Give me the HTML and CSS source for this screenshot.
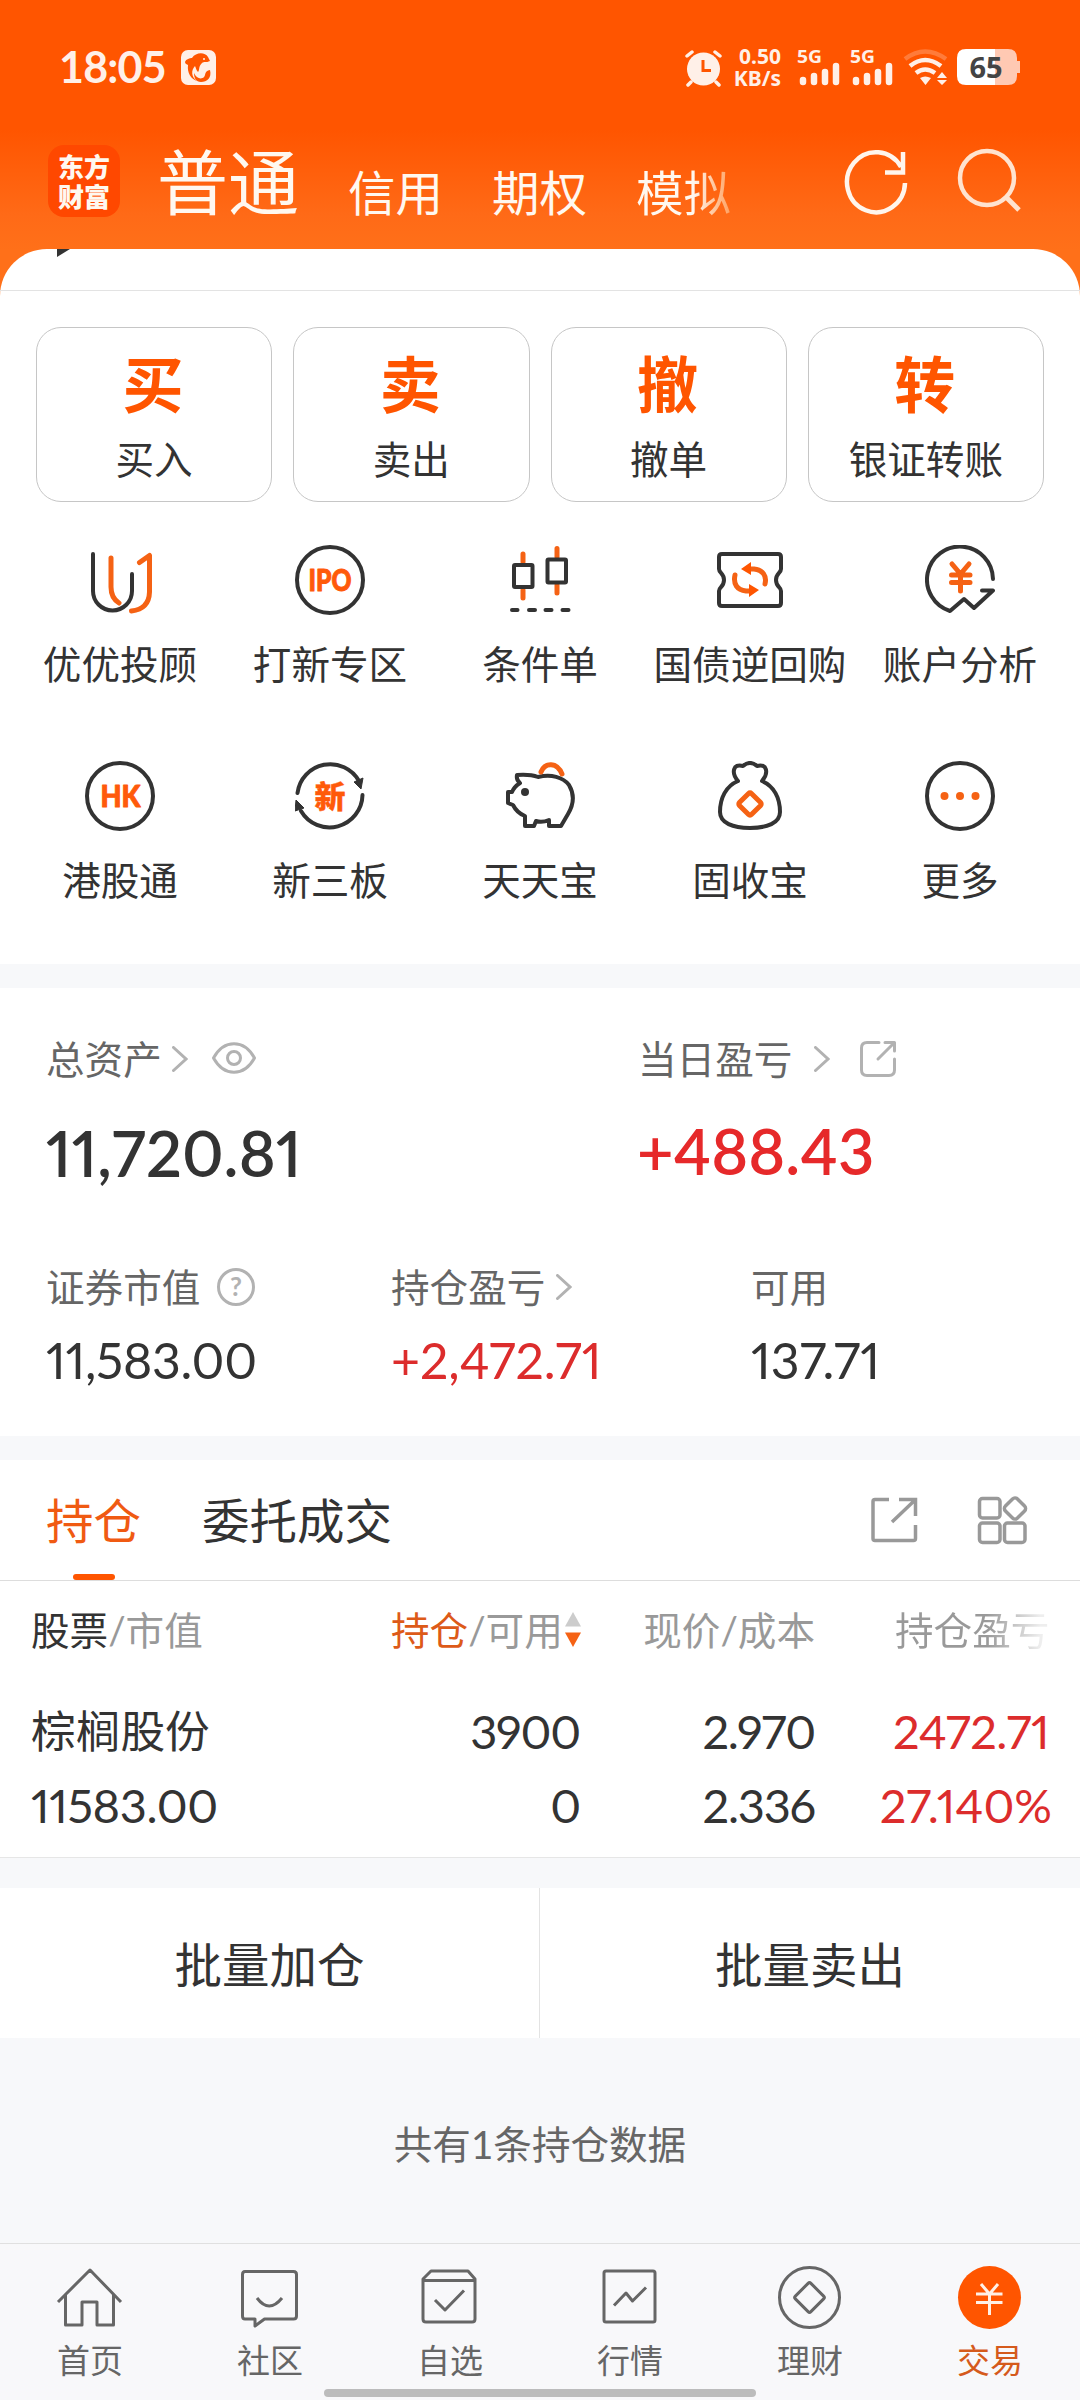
FILE: index.html
```html
<!DOCTYPE html>
<html lang="zh-CN">
<head>
<meta charset="utf-8">
<title>东方财富</title>
<link rel="stylesheet" href="styles.css">
</head>
<body>
<header class="top">
  <div class="status">
    <span class="clock">18:05</span>
    <svg class="app-mark" viewBox="181 49 35 35" width="35" height="35"><rect x="181" y="49" width="35" height="35" rx="7" fill="#fff0e8"/><path d="M185 61C186 58 190 57 192 57C196 51 205 51 208 56L210 60C206 62 204 60 202 62C198 66 200 69 198 71C196 69 196 67 195 65C191 69 191 76 197 80C191 78 187 72 188 64C187 63 185 63 185 61Z" fill="#ff5500"/><circle cx="204" cy="58" r="1" fill="#fff0e8"/><path d="M210 69C212 77 207 81 201 81C196 81 194 77 194 72C196 77 201 79 204 76C206 74 204 70 210 69Z" fill="#ff5500"/></svg>
    <div class="status-right">
      <svg viewBox="684 48 39 39" width="39" height="39"><g fill="none" stroke="#fff0e8" stroke-width="3.5" stroke-linecap="round"><path d="M687 56L692 52M720 56L715 52M691 82L688 85M716 82L719 85"/></g><circle cx="703.5" cy="69" r="16.5" fill="#fff0e8"/><path d="M703 60V70.500H711" fill="none" stroke="#ff5500" stroke-width="3"/></svg>
      <div class="speed">0.50<br>KB/s</div>
      <svg class="signal" viewBox="797 42 44 52" width="44" height="52"><text x="797" y="64" textLength="25" lengthAdjust="spacingAndGlyphs">5G</text><path d="M803 81V83M814 77V83M825 73V83M836 67V83" stroke="#fff0e8" stroke-width="6.500" stroke-linecap="round"/></svg>
      <svg class="signal" viewBox="797 42 44 52" width="44" height="52"><text x="797" y="64" textLength="25" lengthAdjust="spacingAndGlyphs">5G</text><path d="M803 81V83M814 77V83M825 73V83M836 67V83" stroke="#fff0e8" stroke-width="6.500" stroke-linecap="round"/></svg>
      <svg class="wifi" viewBox="903 48 46 40" width="46" height="40"><g fill="none" stroke="#fff0e8" stroke-width="4.500"><path d="M905 60Q925 45 946 60" stroke-opacity=".25"/><path d="M910 67Q925 55 941 67"/><path d="M916 74Q925 67 935 74"/></g><path d="M920 79Q925 76 931 79L925.500 86Z M937 79L942 73L947 79Z M937 81H947L942 86Z" fill="#fff0e8"/></svg>
      <svg class="battery" viewBox="957 45 63 44" width="63" height="44"><path d="M995 49H1008Q1017 49 1017 58V61H1020V73H1017V76Q1017 85 1008 85H995Z" fill="#ffc9b3"/><path d="M995 49H966Q957 49 957 58V76Q957 85 966 85H995Z" fill="#fff"/><text x="986" y="77.500" text-anchor="middle">65</text></svg>
    </div>
  </div>
  <nav class="modes">
    <div class="logo">东方<br>财富</div>
    <span class="mode mode-active">普通</span>
    <span class="mode">信用</span>
    <span class="mode">期权</span>
    <span class="mode mode-fade">模拟</span>
    <svg class="refresh" viewBox="843 149 66 66" width="66" height="66"><path d="M905 183A29 30 0 1 1 901 167M903 152V172.500H885" fill="none" stroke="#fff5ec" stroke-width="4.500"/></svg>
    <svg viewBox="957 147 66 66" width="66" height="66"><circle cx="987" cy="178" r="27" fill="none" stroke="#ffe3cf" stroke-width="4.500"/><path d="M1006 197L1019 210" stroke="#ffe3cf" stroke-width="5"/></svg>
  </nav>
</header>

<main>
<section class="panel">
  <div class="panel-cap"><svg viewBox="0 0 13 8" width="13" height="8"><path d="M0 0H13L0 8Z" fill="#333"/></svg></div>
  <div class="cards">
    <div class="card"><b>买</b><span>买入</span></div>
    <div class="card"><b>卖</b><span>卖出</span></div>
    <div class="card"><b>撤</b><span>撤单</span></div>
    <div class="card"><b>转</b><span>银证转账</span></div>
  </div>
  <div class="shortcuts">
    <div class="shortcut">
      <svg class="ico" viewBox="85 545 70 70"><path class="d" d="M93 554V591a19.500 19.500 0 0 0 39 0V574"/><path class="o" d="M111 558V587Q111 598 119 603M139.500 562.500L149.500 555.500V592Q149 609 131.500 611"/></svg>
      <span>优优投顾</span></div>
    <div class="shortcut">
      <svg class="ico" viewBox="295 545 70 70"><circle class="d" cx="330" cy="580" r="33"/><text x="308.500" y="591" textLength="43" lengthAdjust="spacingAndGlyphs">IPO</text></svg>
      <span>打新专区</span></div>
    <div class="shortcut">
      <svg class="ico" viewBox="505 545 70 70"><path class="o" d="M523 554V562M523 590V598M557 548.500V557M557 585V593"/><rect class="d" x="514" y="565" width="18.500" height="22" rx="1"/><rect class="d" x="547.500" y="559.500" width="18.500" height="23" rx="1"/><path class="d" d="M512 610H517.500M529 610H535M545.500 610H551.500M562.500 610H568.500"/></svg>
      <span>条件单</span></div>
    <div class="shortcut">
      <svg class="ico" viewBox="715 545 70 70"><path class="d" d="M722 554H778Q781 554 781 557V569C781 573 776 573 776 580C776 587 781 587 781 591V603Q781 606 778 606H722Q719 606 719 603V591C719 587 724 587 724 580C724 573 719 573 719 569V557Q719 554 722 554Z"/><path class="o" d="M748 569H754C763 570 767 576 765 584M752 591H746C737 590 733 584 735 575"/><path d="M741 569L751 562V575ZM759 590L749 584V597Z" fill="#ff5500"/></svg>
      <span>国债逆回购</span></div>
    <div class="shortcut">
      <svg class="ico" viewBox="925 545 70 70"><path class="d" d="M993 579A33 33 0 1 0 950 611L964 599L974 608L993 590.500H982"/><path class="o" d="M952 564L960.500 574L969 564M951.500 575H970M951.500 582.500H970M960.500 574V591"/></svg>
      <span>账户分析</span></div>
    <div class="shortcut">
      <svg class="ico" viewBox="85 761 70 70"><circle class="d" cx="120" cy="796" r="33"/><text x="100.500" y="807" textLength="40" lengthAdjust="spacingAndGlyphs">HK</text></svg>
      <span>港股通</span></div>
    <div class="shortcut">
      <svg class="ico" viewBox="295 761 70 70"><path class="d" d="M297.500 793A33 33 0 0 1 359 781M362.500 795A33 33 0 0 1 301 811"/><path d="M354 782L363 778L361 789ZM296 800L304 808L295 811Z" fill="#333" stroke="#333"/><text class="cn" x="330" y="807.500" text-anchor="middle">新</text></svg>
      <span>新三板</span></div>
    <div class="shortcut">
      <svg class="ico" viewBox="505 761 70 70"><path class="d" d="M517 775Q530 774 538 777C551 774 563 777 569 785C575 795 574 804 568 814L561 826H549V820Q542 823 536 821L534 826H525V816Q517 813 513 805L508 803V792H512Q514 787 520 783Q516 780 517 775Z"/><circle cx="525" cy="792" r="4" fill="#333"/><path class="o" d="M541 772C545 762 557 762 562 774"/></svg>
      <span>天天宝</span></div>
    <div class="shortcut">
      <svg class="ico" viewBox="715 761 70 70"><path class="d" d="M738 781C731 773 733 763 743 766Q750 760 757 766C767 763 769 773 762 781C774 786 780 798 780 812C780 823 767 828 750 828C733 828 720 823 720 812C720 798 726 786 738 781"/><rect class="o" x="741.500" y="795.500" width="17" height="17" rx="2" transform="rotate(45 750 804)"/></svg>
      <span>固收宝</span></div>
    <div class="shortcut">
      <svg class="ico" viewBox="925 761 70 70"><circle class="d" cx="960" cy="796" r="33"/><g fill="#f56214"><circle cx="944.500" cy="796" r="4"/><circle cx="960" cy="796" r="4"/><circle cx="975.500" cy="796" r="4"/></g></svg>
      <span>更多</span></div>
  </div>
</section>

<section class="assets">
  <div class="asset-main">
    <div class="asset">
      <div class="label">总资产<svg class="chev c1" viewBox="0 0 16 26" width="16" height="26"><path d="M1.500 1.500L14 13L1.500 24.500"/></svg><svg class="eye" viewBox="211 1043 46 34" width="46" height="34"><path d="M213.500 1059C224 1040 244 1040 254.500 1059C244 1078 224 1078 213.500 1059Z"/><circle cx="234" cy="1059" r="6.500"/></svg></div>
      <div class="big">11,720.81</div>
    </div>
    <div class="asset">
      <div class="label">当日盈亏<svg class="chev c2" viewBox="0 0 16 26" width="16" height="26"><path d="M1.500 1.500L14 13L1.500 24.500"/></svg><svg class="share" viewBox="859 1040 38 38" width="38" height="38"><path d="M879 1042.500H867Q861.500 1042.500 861.500 1048V1070Q861.500 1075.500 867 1075.500H889Q894.500 1075.500 894.500 1070V1059M878 1059L894 1043M885 1042.500H894.500V1051"/></svg></div>
      <div class="big big-red">+488.43</div>
    </div>
  </div>
  <div class="asset-sub">
    <div><div class="label">证券市值<svg class="help" viewBox="0 0 40 40" width="40" height="40"><circle cx="20" cy="20" r="17.500" fill="none" stroke="#b2b2b2" stroke-width="3"/><text x="20" y="29" text-anchor="middle">?</text></svg></div><div class="num n1">11,583.00</div></div>
    <div><div class="label">持仓盈亏<svg class="chev c3" viewBox="0 0 16 26" width="16" height="26"><path d="M1.500 1.500L14 13L1.500 24.500"/></svg></div><div class="num red">+2,472.71</div></div>
    <div><div class="label">可用</div><div class="num">137.71</div></div>
  </div>
</section>

<section class="holdings">
  <div class="tabs">
    <span class="tab tab-active">持仓</span>
    <span class="tab">委托成交</span>
    <svg class="tool t1" viewBox="869 1495 50 50" width="50" height="50"><path d="M889 1499.500H875Q873 1499.500 873 1501.500V1538.500Q873 1540.500 875 1540.500H913.500Q915.500 1540.500 915.500 1538.500V1525M892 1522L914 1501M899 1499.500H915.500V1516"/></svg>
    <svg class="tool" viewBox="976 1495 52 52" width="52" height="52"><rect x="979.500" y="1499.500" width="20.500" height="19.500" rx="3"/><rect x="979.500" y="1524" width="20.500" height="19.500" rx="3"/><rect x="1004.500" y="1524" width="20.500" height="19.500" rx="3"/><rect x="1006.500" y="1501" width="17" height="17" rx="3.500" transform="rotate(45 1015 1509.500)"/></svg>
  </div>
  <div class="row head">
    <span><i>股票</i>/市值</span>
    <span class="sort"><em>持仓</em>/可用<svg viewBox="0 0 16 36" width="16" height="36"><path d="M8 0L16 14.500H0Z" fill="#ccc"/><path d="M0 20.500H16L8 35Z" fill="#f56214"/></svg></span>
    <span class="r">现价/成本</span>
    <span class="r fade">持仓盈亏</span>
  </div>
  <div class="row stock">
    <span class="name">棕榈股份</span>
    <span class="r">3900</span>
    <span class="r">2.970</span>
    <span class="r red">2472.71</span>
  </div>
  <div class="row stock">
    <span>11583.00</span>
    <span class="r">0</span>
    <span class="r">2.336</span>
    <span class="r red rate">27.140%</span>
  </div>
</section>

<div class="actions"><span>批量加仓</span><span>批量卖出</span></div>
<p class="count">共有1条持仓数据</p>
</main>

<footer class="bottom">
  <nav class="dock">
    <div><svg viewBox="54 2265 72 72"><path d="M58 2302L90 2270L121 2302M65.500 2294V2325H82V2302H97V2325H113.500V2294"/></svg><span>首页</span></div>
    <div><svg viewBox="234 2265 72 72"><path d="M245 2271.500H293.500Q296.500 2271.500 296.500 2274.500V2316Q296.500 2319 293.500 2319H264.500L255 2326V2319H245Q242.500 2319 242.500 2316V2274.500Q242.500 2271.500 245 2271.500ZM257 2298Q269 2314 282 2298"/></svg><span>社区</span></div>
    <div><svg viewBox="414 2265 72 72"><path d="M431 2271H468L475 2279V2319Q475 2322 472 2322H426Q423 2322 423 2319V2279ZM423 2280.500H475M435 2300L445 2310L464 2290.500"/></svg><span>自选</span></div>
    <div><svg viewBox="594 2265 72 72"><rect x="604" y="2271" width="51" height="51" rx="2"/><path d="M614 2305.500L626 2293L632.500 2301L646 2287.500"/></svg><span>行情</span></div>
    <div><svg viewBox="774 2265 72 72"><circle cx="809.500" cy="2297.500" r="30"/><rect x="798.500" y="2286.500" width="22" height="22" rx="2" transform="rotate(45 809.500 2297.500)"/></svg><span>理财</span></div>
    <div class="on"><svg viewBox="954 2265 72 72"><circle class="coin" cx="989.500" cy="2297.500" r="31.500"/><path class="yen" d="M981 2284L989.500 2294L998 2284M976 2294H1002.500M976 2302.500H1002.500M989.500 2293V2315"/></svg><span>交易</span></div>
  </nav>
  <div class="home-bar"></div>
</footer>
</body>
</html>
```
FILE: styles.css
```css
* { box-sizing: border-box; }
body {
  margin: 0;
  width: 1080px;
  height: 2400px;
  overflow: hidden;
  display: flex;
  flex-direction: column;
  background: #f7f8fa;
  color: #333;
  font-family: Lato, "Noto Sans CJK SC", sans-serif;
  font-size: 38.6px;
  line-height: 1;
}
svg { display: block; flex: none; }
span { white-space: nowrap; }

/* header */
.top {
  height: 310px;
  margin-bottom: -61px;
  background: linear-gradient(#ff5500 0, #ff5500 130px, #ff6a17 215px, #ff7019 250px);
  color: #fff8f0;
}
.status { height: 134px; display: flex; align-items: center; padding: 0 60px 0 59px; color: #fff0e8; }
.clock { font-size: 43px; font-weight: 700; letter-spacing: -.8px; margin-top: -2px; }
.app-mark { margin-left: 15px; }
.status-right { display: flex; align-items: center; margin-left: auto; }
.speed {
  width: 58px; margin-right: 16px; text-align: right;
  font: 700 21px/22.5px "Noto Sans", sans-serif;
}
.signal { margin-right: 9px; }
.signal text { font: 700 18px "Noto Sans", sans-serif; fill: #fff0e8; }
.wifi { margin-right: 8px; }
.battery text { font: 700 29px "Noto Sans", sans-serif; fill: #444; }
.modes { height: 115px; display: flex; align-items: flex-start; padding: 11px 57px 0 48px; }
.logo {
  width: 72px; height: 72px; padding-top: 6px; border-radius: 16px; background: #ff4800;
  font-family: "Noto Sans CJK SC", sans-serif; text-align: center;
  font-weight: 900; font-size: 26px; line-height: 30px;
}
.mode { font-size: 47.5px; line-height: 70px; margin: 13px 0 0 49px; }
.mode-active { font-size: 71px; line-height: 74px; margin: 0 0 0 37px; }
.mode-fade { color: transparent; background: linear-gradient(90deg, #fff8f0 60%, #ffa060 100%); background-clip: text; -webkit-background-clip: text; }
.refresh { margin-left: auto; margin-right: 48px; margin-top: 4px; }
.modes svg:last-child { margin-top: 2px; }

/* trading panel */
.panel { height: 715px; background: #fff; border-radius: 47px 47px 0 0; }
.panel-cap { height: 42px; padding-left: 57px; border-bottom: 1px solid #e3e3e3; }
.cards { display: grid; grid-template-columns: repeat(4, 1fr); gap: 21px; padding: 36px 36px 0 36px; }
.card {
  height: 175px; border: 1px solid #c6c6c6; border-radius: 25px;
  display: flex; flex-direction: column; align-items: center;
}
.card b { margin-top: 21px; margin-right: 2px; font-size: 61px; line-height: 72px; font-weight: 700; color: #ff5500; }
.card span { margin-top: 13px; line-height: 50px; }
.shortcuts { display: grid; grid-template-columns: repeat(5, 210px); grid-auto-rows: 216px; padding: 43px 15px 0; }
.shortcut { display: flex; flex-direction: column; align-items: center; }
.shortcut span { margin-top: 24px; line-height: 50px; }
.ico { width: 70px; height: 70px; }
.ico .d, .ico .o { fill: none; stroke-width: 4; stroke-linejoin: round; stroke-linecap: round; }
.ico .d { stroke: #333; }
.ico .o { stroke: #f56214; stroke-width: 5; }
.ico text { font: 900 30px Lato, sans-serif; fill: #ff5a0a; stroke: #ff5a0a; stroke-width: 1; stroke-linejoin: round; }
.ico .cn { font: 900 31px "Noto Sans CJK SC", sans-serif; stroke-width: .4; }

/* assets */
.assets { height: 448px; margin-top: 24px; padding: 45px 0 0 46px; background: #fff; }
.asset-main { display: grid; grid-template-columns: 592px 1fr; }
.label { display: flex; align-items: center; height: 52px; color: #666; }
.chev path { fill: none; stroke: #b2b2b2; stroke-width: 3; stroke-linecap: round; }
.c1 { margin-left: 10px; }
.eye { margin-left: 23px; }
.eye path, .eye circle, .share path { fill: none; stroke: #b2b2b2; stroke-width: 3; stroke-linejoin: round; stroke-linecap: round; }
.c2 { margin-left: 22px; }
.share { margin-left: 29px; }
.c3 { margin-left: 11px; }
.help { margin-left: 16px; }
.help text { font: 700 26px Lato, sans-serif; fill: #b2b2b2; }
.big { margin-top: 32px; height: 72px; line-height: 72px; font-size: 63px; font-weight: 600; letter-spacing: .2px; font-variant-numeric: proportional-nums; }
.big-red { margin-top: 30px; margin-left: -1px; letter-spacing: 0; color: #e6292a; }
.asset-sub { display: grid; grid-template-columns: 345px 360px 1fr; margin-top: 72px; }
.num { height: 60px; margin-top: 17px; font-size: 50px; line-height: 60px; font-variant-numeric: proportional-nums; }
.n1 { letter-spacing: -.3px; }
.red { color: #dc2c2c; }

/* holdings */
.holdings { height: 398px; margin-top: 24px; background: #fff; border-bottom: 1px solid #e6e6e6; }
.tabs { height: 121px; display: flex; align-items: center; padding: 0 52px 0 46px; border-bottom: 1px solid #ddd; }
.tab { font-size: 47.5px; height: 120px; line-height: 122px; margin-right: 61px; }
.tab-active { display: flex; flex-direction: column; align-items: center; color: #f05a12; }
.tab-active::after { content: ""; width: 42px; height: 6px; margin-top: -8px; border-radius: 3px; background: #ff5500; }
.t1 { margin-left: auto; margin-right: 57px; }
.tool path, .tool rect { fill: none; stroke: #999; stroke-width: 3.5; }
.row { display: grid; grid-template-columns: 360px 189px 235px 233px; padding-left: 31px; align-items: center; }
.head { height: 98px; margin-bottom: 16px; color: #999; }
.head i { font-style: normal; color: #333; }
.head em { font-style: normal; color: #dd5a18; }
.sort { display: flex; align-items: center; }
.sort svg { margin-left: 2px; }
.head .r { text-align: right; }
.fade { color: transparent; background: linear-gradient(90deg, #999 0, #999 60%, #eee 95%); background-clip: text; -webkit-background-clip: text; margin-left: 80px; }
.stock { height: 73.5px; font-size: 47px; letter-spacing: -.4px; font-variant-numeric: proportional-nums; }
.stock .name { font-size: 44.7px; letter-spacing: 0; }
.stock .r { text-align: right; letter-spacing: -1.2px; }
.stock .red { letter-spacing: -.5px; margin-right: -1px; }
.stock .rate { margin-right: -4px; letter-spacing: 0; }

/* bulk actions */
.actions { display: flex; height: 150px; margin-top: 30px; background: #fff; font-size: 47.5px; line-height: 153px; }
.actions span { width: 541px; text-align: center; }
.actions span:first-child { width: 539px; }
.actions span + span { border-left: 1px solid #e3e3e3; }
.count { margin: 81px 0 0; line-height: 50px; text-align: center; color: #666; }

/* bottom navigation */
.bottom { height: 157px; margin-top: auto; background: #f8f8fa; border-top: 1px solid #e0e0e0; }
.dock { height: 145px; padding-top: 21px; display: grid; grid-template-columns: repeat(6, 180px); color: #666; font-size: 33px; }
.dock div { display: flex; flex-direction: column; align-items: center; }
.dock svg { width: 72px; height: 72px; fill: none; stroke: #666; stroke-width: 3; stroke-linejoin: round; }
.dock span { line-height: 44px; margin-top: 1px; }
.dock .on { color: #d55a1c; }
.dock .coin { fill: #ff5500; stroke: none; }
.dock .yen { stroke: #fff0e6; }
.home-bar { width: 432px; height: 8px; margin: 0 auto; border-radius: 4px; background: #bcbcbc; }
```
